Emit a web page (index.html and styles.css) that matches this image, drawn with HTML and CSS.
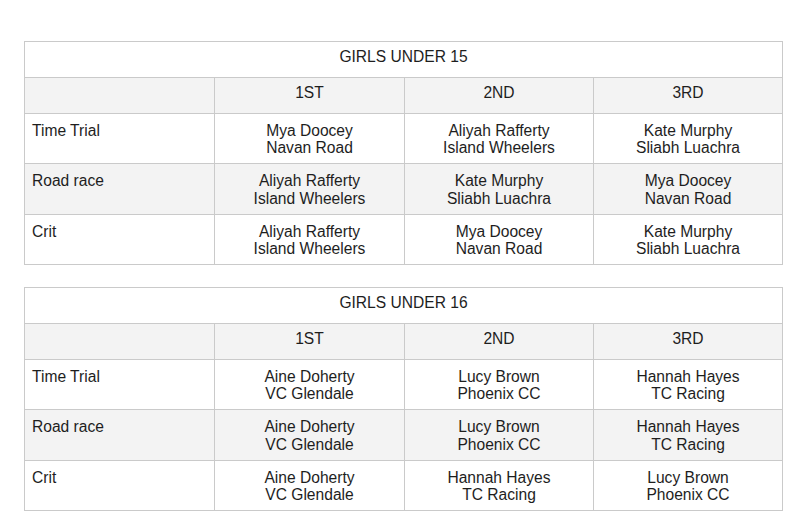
FILE: index.html
```html
<!DOCTYPE html>
<html>
<head>
<meta charset="utf-8">
<link rel="stylesheet" href="styles.css">
</head>
<body>
<div class="page">
  <table class="results">
    <colgroup><col class="c1"><col class="c2"><col class="c3"><col class="c4"></colgroup>
    <tr class="title"><td colspan="4">GIRLS UNDER 15</td></tr>
    <tr class="head"><td></td><td>1ST</td><td>2ND</td><td>3RD</td></tr>
    <tr class="row"><td class="event">Time Trial</td><td>Mya Doocey<br>Navan Road</td><td>Aliyah Rafferty<br>Island Wheelers</td><td>Kate Murphy<br>Sliabh Luachra</td></tr>
    <tr class="row alt"><td class="event">Road race</td><td>Aliyah Rafferty<br>Island Wheelers</td><td>Kate Murphy<br>Sliabh Luachra</td><td>Mya Doocey<br>Navan Road</td></tr>
    <tr class="row"><td class="event">Crit</td><td>Aliyah Rafferty<br>Island Wheelers</td><td>Mya Doocey<br>Navan Road</td><td>Kate Murphy<br>Sliabh Luachra</td></tr>
  </table>
  <table class="results">
    <colgroup><col class="c1"><col class="c2"><col class="c3"><col class="c4"></colgroup>
    <tr class="title"><td colspan="4">GIRLS UNDER 16</td></tr>
    <tr class="head"><td></td><td>1ST</td><td>2ND</td><td>3RD</td></tr>
    <tr class="row"><td class="event">Time Trial</td><td>Aine Doherty<br>VC Glendale</td><td>Lucy Brown<br>Phoenix CC</td><td>Hannah Hayes<br>TC Racing</td></tr>
    <tr class="row alt"><td class="event">Road race</td><td>Aine Doherty<br>VC Glendale</td><td>Lucy Brown<br>Phoenix CC</td><td>Hannah Hayes<br>TC Racing</td></tr>
    <tr class="row"><td class="event">Crit</td><td>Aine Doherty<br>VC Glendale</td><td>Hannah Hayes<br>TC Racing</td><td>Lucy Brown<br>Phoenix CC</td></tr>
  </table>
</div>
</body>
</html>
```

FILE: styles.css
```css
html, body {
  margin: 0;
  padding: 0;
  background: #ffffff;
}

.page {
  padding: 41px 0 0 24px;
  font-family: "Liberation Sans", Arial, Helvetica, sans-serif;
  font-size: 15.6px;
  line-height: 17.5px;
  color: #1e1e1e;
}

.results {
  width: 758px;
  table-layout: fixed;
  border-spacing: 0;
  border-collapse: separate;
  border-right: 1px solid #cacaca;
  border-bottom: 1px solid #cacaca;
  margin-bottom: 22px;
}

.c1 { width: 190px; }
.c2 { width: 190px; }
.c3 { width: 189px; }
.c4 { width: 189px; }

.results td {
  border-top: 1px solid #cacaca;
  border-left: 1px solid #cacaca;
  text-align: center;
  vertical-align: top;
  padding: 8px 8px 6.5px;
}

.results .title td {
  padding: 6px 8px 11.5px;
}

.results .head td {
  padding: 6px 8px 11px;
  background: #f3f3f3;
}

.results .alt td {
  background: #f3f3f3;
}

.results td.event {
  text-align: left;
  padding-left: 7px;
}
```
